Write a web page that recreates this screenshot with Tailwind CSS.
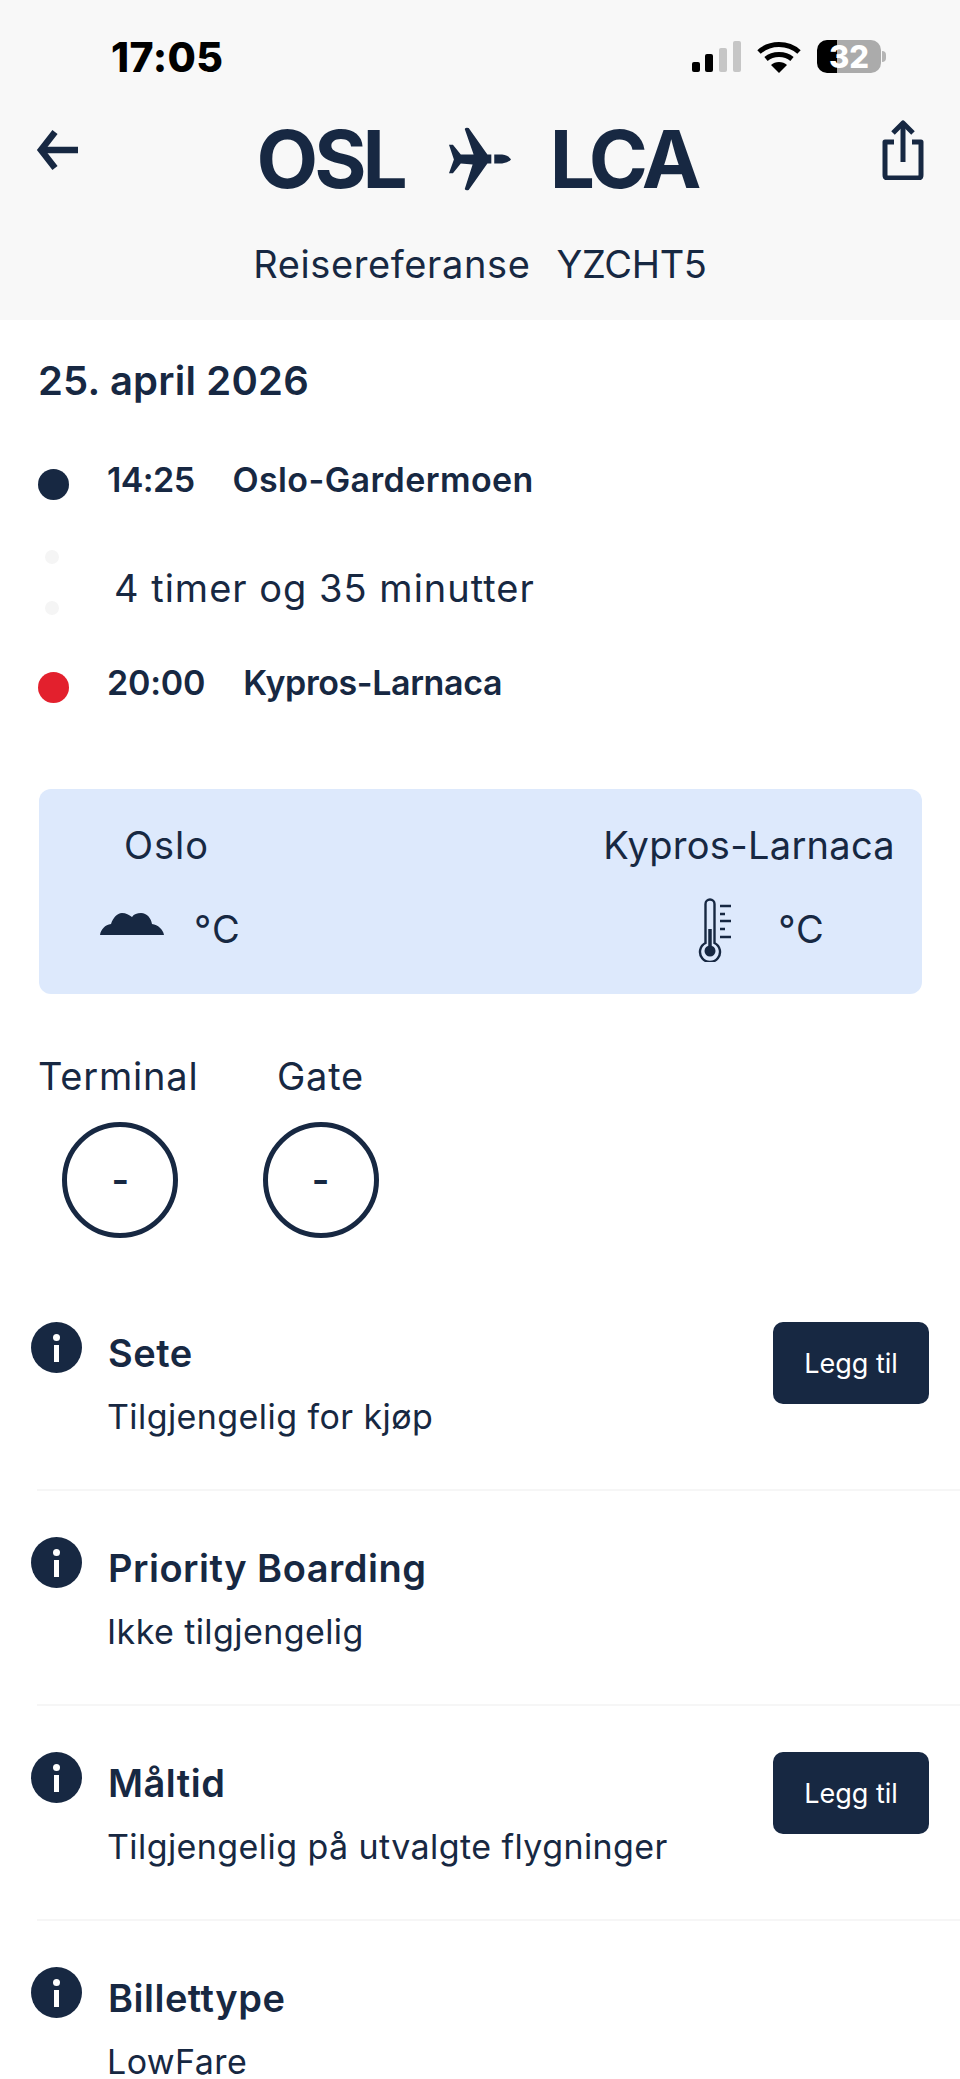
<!DOCTYPE html>
<html lang="no">
<head>
  <meta charset="UTF-8">
  <meta name="viewport" content="width=device-width, initial-scale=1.0">
  <title>OSL - LCA</title>
  <script src="https://cdn.jsdelivr.net/npm/@tailwindcss/browser@4"></script>
</head>
<body class="bg-white">
  <div class="h-[2079px] overflow-hidden font-['Inter',sans-serif] text-[#172842]">
    <!-- header -->
    <header class="h-[320px] bg-[#f8f8f8] pt-[40px]">
      <div class="flex h-[33px] items-center justify-between pl-[111px] pr-[74px]">
        <span class="pt-[2px] text-[41px] leading-[33px] font-extrabold text-black tracking-[0.01em]">17:05</span>
        <div class="flex items-center">
          <svg class="w-[49px] h-[31px]" viewBox="0 0 49 31">
            <rect x="0" y="21" width="8" height="10" rx="2" fill="#000"/>
            <rect x="13" y="13" width="8" height="18" rx="2" fill="#000"/>
            <rect x="27" y="7" width="8" height="24" rx="2" fill="#c6c6c6"/>
            <rect x="41" y="0" width="8" height="31" rx="2" fill="#c6c6c6"/>
          </svg>
          <svg class="ml-[16px] w-[44px] h-[32px]" viewBox="0 0 44 32" fill="none" stroke="#000" stroke-width="5">
            <path d="M2 11 C13 1 31 1 42 11"/>
            <path d="M9 18 C16 12 28 12 35 18"/>
            <path d="M22 32 L14 24 C18 20 26 20 30 24 Z" fill="#000" stroke="none"/>
          </svg>
          <div class="ml-[16px] relative flex w-[64px] h-[33px] items-center justify-center rounded-[10px] bg-[linear-gradient(90deg,#000_20px,#ababab_20px)]">
            <span class="text-[31px] font-extrabold text-white leading-[33px]">32</span>
          </div>
          <div class="ml-[1px] w-[4px] h-[11px] rounded-r-full bg-[#b5b5b5]"></div>
        </div>
      </div>
      <div class="mt-[47px] flex items-start justify-between px-[36px]">
        <svg class="mt-[10px] w-[42px] h-[40px]" viewBox="0 0 42 40" fill="none" stroke="#172842" stroke-width="6.5">
          <path d="M42 20 H5"/>
          <path d="M19 2 L5 20 L19 38"/>
        </svg>
        <div class="mr-[6px] flex items-center h-[78px]">
          <span class="text-[80px] leading-[78px] font-bold tracking-[-0.05em]">OSL</span>
          <svg class="ml-[44px] w-[64px] h-[64px]" viewBox="18 14 65 65" fill="#172842">
            <path d="M19 32 L23 32 L31 42 L44 42 L35 16 Q36 14 39 15 L58 42 L62 42 L62 51 L58 51 L39 78 Q36 79 35 77 L43 52 L31 51 L23 61 L19 61 L24 47 Z"/>
            <path d="M65 42 L73 42 Q80 43 82 47 Q80 50 73 51 L65 51 Z"/>
          </svg>
          <span class="ml-[38px] text-[80px] leading-[78px] font-bold tracking-[-0.05em]">LCA</span>
        </div>
        <svg class="w-[42px] h-[60px]" viewBox="0 0 42 60" fill="none" stroke="#172842" stroke-width="5" stroke-linejoin="round">
          <path d="M12 22 H3 V55 Q3 58 6 58 H36 Q39 58 39 55 V22 H30"/>
          <path d="M21 42 V3"/>
          <path d="M11 13 L21 3 L31 13"/>
        </svg>
      </div>
      <p class="mt-[43px] flex justify-center text-[38px] leading-[46px]">
        <span class="tracking-[0.6px]">Reisereferanse</span>
        <span class="ml-[26px] tracking-[-0.3px]">YZCHT5</span>
      </p>
    </header>

    <!-- flight -->
    <section class="pt-[37px] pl-[38px]">
      <h2 class="text-[40px] leading-[48px] font-semibold tracking-[0.2px]">25. april 2026</h2>
      <div class="mt-[55px] flex items-start">
        <span class="mt-[9px] size-[31px] rounded-full bg-[#172842]"></span>
        <span class="ml-[38px] text-[34px] leading-[40px] font-semibold tracking-[-0.6px]">14:25</span>
        <span class="ml-[38px] text-[34px] leading-[40px] font-semibold tracking-[0.4px]">Oslo-Gardermoen</span>
      </div>
      <div class="mt-[50px] flex h-[65px]">
        <div class="ml-[7px] flex w-[14px] flex-col justify-between">
          <span class="size-[14px] rounded-full bg-[#f5f5f5]"></span>
          <span class="size-[14px] rounded-full bg-[#f5f5f5]"></span>
        </div>
        <span class="ml-[55px] pt-[15px] text-[38px] leading-[46px] tracking-[1px]">4 timer og 35 minutter</span>
      </div>
      <div class="mt-[48px] flex items-start">
        <span class="mt-[9px] size-[31px] rounded-full bg-[#e3202d]"></span>
        <span class="ml-[38px] text-[34px] leading-[40px] font-semibold tracking-[-0.2px]">20:00</span>
        <span class="ml-[38px] text-[34px] leading-[40px] font-semibold tracking-[-0.4px]">Kypros-Larnaca</span>
      </div>
    </section>

    <!-- weather -->
    <section class="ml-[39px] mt-[86px] flex h-[205px] w-[883px] justify-between rounded-[12px] bg-[#dde9fc] pt-[33px] pl-[61px] pr-[27px]">
      <div>
        <p class="ml-[24px] text-[38px] leading-[46px] tracking-[1px]">Oslo</p>
        <div class="mt-[33px] flex items-start">
          <svg class="mt-[12px] w-[64px] h-[22px]" viewBox="0 0 64 22" fill="#172842">
            <path d="M0 22 C1 16 5 12 11 11 C13 5 17 0 22 0 C26 0 29 2 32 4 C34 1 37 0 41 0 C47 0 51 5 52 11 C58 12 63 16 64 22 Z"/>
          </svg>
          <span class="ml-[30px] mt-[5px] text-[38px] leading-[46px] tracking-[1px]">°C</span>
        </div>
      </div>
      <div>
        <p class="text-[38px] leading-[46px] tracking-[0.3px]">Kypros-Larnaca</p>
        <div class="mt-[29px] flex items-start pl-[95px]">
          <svg class="w-[34px] h-[65px]" viewBox="37 17 34 65" fill="none" stroke="#172842" stroke-width="2.4">
            <path d="M44.5 63 V24 a4.5 4.5 0 0 1 9 0 V63 a10 10 0 1 1 -9 0 Z"/>
            <path d="M49 49 V70" stroke-width="3.5"/>
            <circle cx="49" cy="71" r="5.5" fill="#172842" stroke="none"/>
            <path d="M59 26 H70 M59 34 H64 M59 41 H70 M59 49 H64 M59 57 H70"/>
          </svg>
          <span class="ml-[46px] mt-[9px] text-[38px] leading-[46px] tracking-[1px]">°C</span>
        </div>
      </div>
    </section>

    <!-- terminal / gate -->
    <section class="mt-[59px] flex gap-[64px] pl-[38px]">
      <div class="flex flex-col items-center">
        <p class="text-[38px] leading-[46px] tracking-[0.8px]">Terminal</p>
        <div class="ml-[4px] mt-[23px] flex size-[116px] items-center justify-center rounded-full border-[5px] border-[#172842] text-[38px] font-semibold">-</div>
      </div>
      <div class="flex flex-col items-center">
        <p class="text-[38px] leading-[46px] tracking-[0.8px]">Gate</p>
        <div class="mt-[23px] flex size-[116px] items-center justify-center rounded-full border-[5px] border-[#172842] text-[38px] font-semibold">-</div>
      </div>
    </section>

    <!-- services -->
    <section class="mt-[84px]">
      <div class="flex h-[167px] items-start pl-[31px] pr-[31px]">
        <svg class="w-[51px] h-[51px] shrink-0" viewBox="0 0 51 51"><circle cx="25.5" cy="25.5" r="25.5" fill="#172842"/><circle cx="25.5" cy="15.5" r="3.5" fill="#fff"/><rect x="23" y="23" width="5" height="17" fill="#fff"/></svg>
        <div class="ml-[26px] flex-1 pt-[8px]">
          <h3 class="text-[38px] leading-[46px] font-semibold tracking-[0.5px]">Sete</h3>
          <p class="-ml-[1px] mt-[20px] text-[34px] leading-[42px] tracking-[0.42px]">Tilgjengelig for kjøp</p>
        </div>
        <button class="flex h-[82px] w-[156px] items-center justify-center rounded-[10px] bg-[#172842] pt-[2px] text-[27px] text-white">Legg til</button>
      </div>
      <div class="ml-[37px] h-[2px] bg-[#f6f6f6]"></div>

      <div class="mt-[46px] flex h-[167px] items-start pl-[31px] pr-[31px]">
        <svg class="w-[51px] h-[51px] shrink-0" viewBox="0 0 51 51"><circle cx="25.5" cy="25.5" r="25.5" fill="#172842"/><circle cx="25.5" cy="15.5" r="3.5" fill="#fff"/><rect x="23" y="23" width="5" height="17" fill="#fff"/></svg>
        <div class="ml-[26px] flex-1 pt-[8px]">
          <h3 class="text-[38px] leading-[46px] font-semibold tracking-[0.5px]">Priority Boarding</h3>
          <p class="-ml-[1px] mt-[20px] text-[34px] leading-[42px] tracking-[0.42px]">Ikke tilgjengelig</p>
        </div>
      </div>
      <div class="ml-[37px] h-[2px] bg-[#f6f6f6]"></div>

      <div class="mt-[46px] flex h-[167px] items-start pl-[31px] pr-[31px]">
        <svg class="w-[51px] h-[51px] shrink-0" viewBox="0 0 51 51"><circle cx="25.5" cy="25.5" r="25.5" fill="#172842"/><circle cx="25.5" cy="15.5" r="3.5" fill="#fff"/><rect x="23" y="23" width="5" height="17" fill="#fff"/></svg>
        <div class="ml-[26px] flex-1 pt-[8px]">
          <h3 class="text-[38px] leading-[46px] font-semibold tracking-[0.5px]">Måltid</h3>
          <p class="-ml-[1px] mt-[20px] text-[34px] leading-[42px] tracking-[0.42px]">Tilgjengelig på utvalgte flygninger</p>
        </div>
        <button class="flex h-[82px] w-[156px] items-center justify-center rounded-[10px] bg-[#172842] pt-[2px] text-[27px] text-white">Legg til</button>
      </div>
      <div class="ml-[37px] h-[2px] bg-[#f6f6f6]"></div>

      <div class="mt-[46px] flex h-[167px] items-start pl-[31px] pr-[31px]">
        <svg class="w-[51px] h-[51px] shrink-0" viewBox="0 0 51 51"><circle cx="25.5" cy="25.5" r="25.5" fill="#172842"/><circle cx="25.5" cy="15.5" r="3.5" fill="#fff"/><rect x="23" y="23" width="5" height="17" fill="#fff"/></svg>
        <div class="ml-[26px] flex-1 pt-[8px]">
          <h3 class="text-[38px] leading-[46px] font-semibold tracking-[0.5px]">Billettype</h3>
          <p class="-ml-[1px] mt-[20px] text-[34px] leading-[42px] tracking-[0.42px]">LowFare</p>
        </div>
      </div>
    </section>
  </div>
</body>
</html>
